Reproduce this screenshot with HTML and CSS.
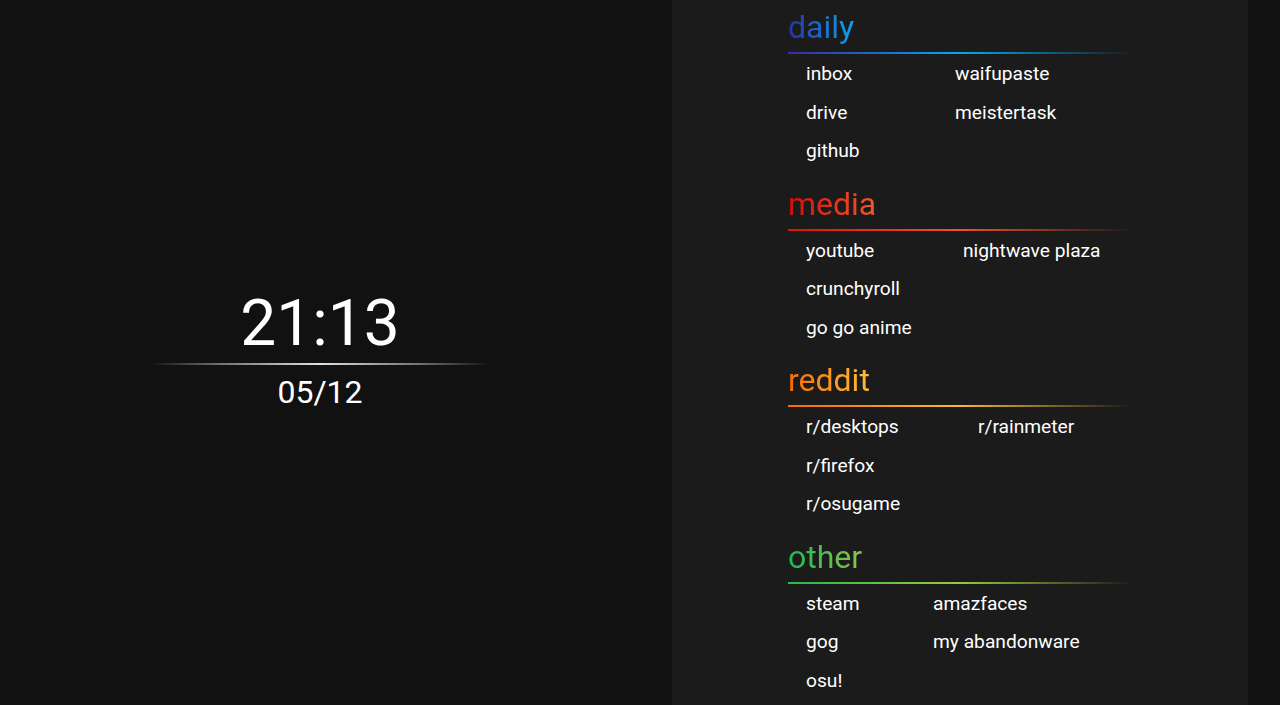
FILE: index.html
```html
<!DOCTYPE html>
<html>
<head>
<meta charset="utf-8">
<link rel="stylesheet" href="styles.css">
</head>
<body>
<div class="page">
  <div class="left">
    <div class="clock">
      <div class="time">21:13</div>
      <div class="rule"></div>
      <div class="date">05/12</div>
    </div>
  </div>
  <div class="panel">
    <div class="content">
      <section class="group daily">
        <h2><span>daily</span></h2>
        <ul class="links">
          <li>inbox</li><li>waifupaste</li>
          <li>drive</li><li>meistertask</li>
          <li>github</li>
        </ul>
      </section>
      <section class="group media">
        <h2><span>media</span></h2>
        <ul class="links">
          <li>youtube</li><li>nightwave plaza</li>
          <li>crunchyroll</li><li></li>
          <li>go go anime</li>
        </ul>
      </section>
      <section class="group reddit">
        <h2><span>reddit</span></h2>
        <ul class="links">
          <li>r/desktops</li><li>r/rainmeter</li>
          <li>r/firefox</li><li></li>
          <li>r/osugame</li>
        </ul>
      </section>
      <section class="group other">
        <h2><span>other</span></h2>
        <ul class="links">
          <li>steam</li><li>amazfaces</li>
          <li>gog</li><li>my abandonware</li>
          <li>osu!</li>
        </ul>
      </section>
    </div>
  </div>
</div>
</body>
</html>
```
FILE: styles.css
```css
html, body {
  margin: 0;
  padding: 0;
  height: 100%;
}
body {
  background: #111111;
  color: #ffffff;
  font-family: Roboto, "Noto Sans", sans-serif;
  overflow: hidden;
}
.page {
  display: grid;
  grid-template-columns: 672px 576px;
  height: 705px;
}
.left {
  display: flex;
  align-items: center;
  justify-content: center;
  padding-right: 32px;
}
.clock {
  width: 342px;
  display: flex;
  flex-direction: column;
  align-items: center;
  padding-bottom: 7px;
}
.time {
  font-size: 64px;
  line-height: 64px;
  color: #ffffff;
}
.rule {
  width: 342px;
  height: 2px;
  margin-top: 7px;
  background: linear-gradient(to right, rgba(255,255,255,0), rgba(150,150,150,0.7) 20%, rgba(225,225,225,1) 50%, rgba(150,150,150,0.7) 80%, rgba(255,255,255,0));
}
.date {
  font-size: 32px;
  line-height: 32px;
  margin-top: 11px;
  color: #ffffff;
}
.panel {
  background: #1b1b1b;
  display: flex;
  justify-content: center;
}
.content {
  width: 344px;
}
.group {
  padding: 7px 0 6px 0;
}
.group h2 {
  margin: 0;
  font-size: 32px;
  line-height: 40px;
  font-weight: 400;
}
.group h2 span {
  -webkit-background-clip: text;
  background-clip: text;
  color: transparent;
}
.group h2::after {
  content: "";
  display: block;
  height: 2px;
  margin-top: 5px;
}
.links {
  list-style: none;
  margin: 0;
  padding: 1px 0 0 18px;
  display: grid;
  grid-auto-rows: 38.5px;
  font-size: 19.2px;
  line-height: 38.5px;
  color: #ffffff;
}
.links li {
  white-space: nowrap;
}

.daily h2 span { background-image: linear-gradient(to right, #2b2fa6, #0aa6f2); }
.daily h2::after { background: linear-gradient(to right, #3a2aa6, #00aaf2 50%, rgba(0,170,242,0)); }
.daily .links { grid-template-columns: 149px auto; }

.media h2 span { background-image: linear-gradient(to right, #d40c0c, #f4582a); }
.media h2::after { background: linear-gradient(to right, #dd1010, #f4502a 50%, rgba(244,80,42,0)); }
.media .links { grid-template-columns: 157px auto; }

.reddit h2 span { background-image: linear-gradient(to right, #f76b06, #fbbf38); }
.reddit h2::after { background: linear-gradient(to right, #f76b06, #f5bb30 50%, rgba(245,187,48,0)); }
.reddit .links { grid-template-columns: 172px auto; }

.other h2 span { background-image: linear-gradient(to right, #1db954, #8bc34a); }
.other h2::after { background: linear-gradient(to right, #22bb4c, #9bc740 50%, rgba(155,199,64,0)); }
.other .links { grid-template-columns: 127px auto; }
```
